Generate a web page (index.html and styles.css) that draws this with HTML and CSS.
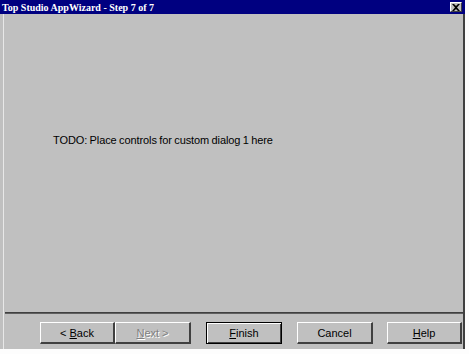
FILE: index.html
```html
<!DOCTYPE html>
<html lang="en">
<head>
    <meta charset="UTF-8">
    <title>Top Studio AppWizard - Step 7 of 7</title>
    <link rel="stylesheet" href="styles.css">
</head>
<body>

    <!-- Wizard dialog -->
    <div class="window">
        <div class="titlebar">
            <span class="title">Top Studio AppWizard - Step 7 of 7</span>
            <span class="close-btn">
                <svg width="8" height="7" viewBox="0 0 8 7">
                    <path d="M0 0h2l2 2 2-2h2L5 3.5 8 7H6L4 5 2 7H0l3-3.5z" fill="#000"/>
                </svg>
            </span>
        </div>

        <div class="panel">
            <div class="page">
                <p class="todo">TODO: Place controls for custom dialog 1 here</p>
            </div>

            <div class="separator"></div>

            <!-- Wizard buttons -->
            <div class="button-row">
                <div class="nav-group">
                    <button class="btn"><span>&lt; <u>B</u>ack</span></button>
                    <button class="btn disabled"><span><u>N</u>ext &gt;</span></button>
                </div>
                <button class="btn default"><span><u>F</u>inish</span></button>
                <button class="btn">Cancel</button>
                <button class="btn help"><span><u>H</u>elp</span></button>
            </div>
        </div>
    </div>

</body>
</html>
```

FILE: styles.css
```css
/* General */
body {
    margin: 0;
    background-color: #fdfdfd;
    font-family: "Liberation Sans", Arial, sans-serif;
}

/* Dialog frame */
.window {
    width: 465px;
    height: 349px;
    background-color: #c0c0c0;
    display: flex;
    flex-direction: column;
}

.titlebar {
    height: 14px;
    background-color: #000080;
    color: #fff;
    display: flex;
    align-items: center;
    justify-content: space-between;
    padding: 0 3px 0 2px;
}

.title {
    font-family: "Liberation Serif", "Times New Roman", serif;
    font-weight: bold;
    font-size: 10px;
}

.close-btn {
    width: 12px;
    height: 10px;
    background-color: #c0c0c0;
    border-top: 1px solid #fff;
    border-left: 1px solid #fff;
    border-right: 1px solid #404040;
    border-bottom: 1px solid #404040;
    box-sizing: border-box;
    display: flex;
    align-items: center;
    justify-content: center;
}

.panel {
    flex: 1;
    display: flex;
    flex-direction: column;
    margin-left: 3px;
    border-left: 1px solid #e8e8e8;
    border-right: 2px solid #404040;
}

.page {
    flex: 1;
}

.todo {
    margin: 120px 0 0 49px;
    font-size: 11px;
    word-spacing: -0.5px;
    letter-spacing: -0.1px;
    color: #000;
}

.separator {
    height: 1px;
    margin: 0 0 0 1px;
    background-color: #404040;
    border-bottom: 1px solid #606060;
}

/* Buttons */
.button-row {
    display: flex;
    padding: 8px 0 5px 36px;
}

.nav-group {
    display: flex;
    margin-right: 15px;
}

.btn {
    width: 76px;
    height: 22px;
    padding: 0;
    background-color: #c0c0c0;
    border-top: 1px solid #fff;
    border-left: 1px solid #fff;
    border-right: 2px solid #404040;
    border-bottom: 2px solid #404040;
    font-family: "Liberation Sans", Arial, sans-serif;
    font-size: 11px;
    color: #000;
    margin-right: 15px;
}

.nav-group .btn {
    margin-right: 0;
}

.nav-group .btn:first-child {
    width: 75px;
}

.btn.disabled {
    color: #808080;
    text-shadow: 1px 1px 0 #fff;
}

.btn.default {
    border: 1px solid #000;
    box-shadow: inset 1px 1px 0 #fff, inset -1px -1px 0 #404040;
}

.btn.help {
    width: 75px;
    margin-right: 0;
    margin-left: -1px;
}
```
